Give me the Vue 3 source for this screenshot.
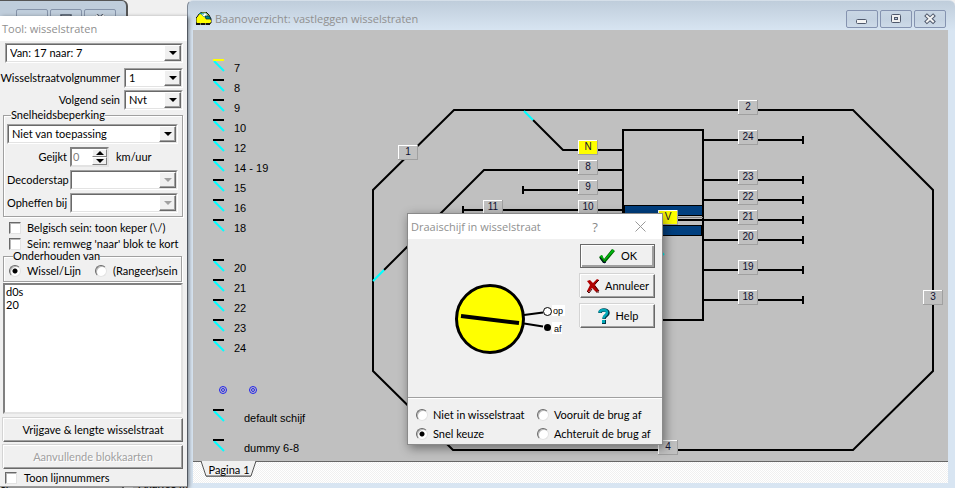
<script setup>
import { ref } from 'vue'

const route = ref('Van: 17 naar: 7')
const routeNumber = ref('1')
const nextSignal = ref('Nvt')
const speedLimit = ref('Niet van toepassing')
const speed = ref(0)
const belgian = ref(false)
const brakeShort = ref(false)
const maintain = ref('wissel')
const showLines = ref(false)
const choice = ref('snel')

const switches = [
  { y: 60, text: '7', active: true },
  { y: 80, text: '8' },
  { y: 100, text: '9' },
  { y: 120, text: '10' },
  { y: 140, text: '12' },
  { y: 160, text: '14 - 19' },
  { y: 180, text: '15' },
  { y: 200, text: '16' },
  { y: 220, text: '18' },
  { y: 260, text: '20' },
  { y: 280, text: '21' },
  { y: 300, text: '22' },
  { y: 320, text: '23' },
  { y: 340, text: '24' },
  { y: 410, text: 'default schijf', x: 244 },
  { y: 440, text: 'dummy 6-8', x: 244 },
]

const sidings = [140, 180, 200, 220, 240, 270, 300]

const blocks = [
  { x: 398, y: 145, text: '1' },
  { x: 738, y: 100, text: '2' },
  { x: 923, y: 290, text: '3' },
  { x: 658, y: 440, text: '4' },
  { x: 578, y: 140, text: 'N', hot: true },
  { x: 578, y: 160, text: '8' },
  { x: 578, y: 180, text: '9' },
  { x: 578, y: 200, text: '10' },
  { x: 483, y: 200, text: '11' },
  { x: 658, y: 210, text: 'V', hot: true },
  { x: 738, y: 130, text: '24' },
  { x: 738, y: 170, text: '23' },
  { x: 738, y: 190, text: '22' },
  { x: 738, y: 210, text: '21' },
  { x: 738, y: 230, text: '20' },
  { x: 738, y: 260, text: '19' },
  { x: 738, y: 290, text: '18' },
]
</script>

<template>
  <div class="desktop">
    <div class="back-window">
      <div class="back-title">
        <span class="cap"></span>
        <span class="cap"><svg width="12" height="9" viewBox="0 0 12 9"><rect x="1" y="1" width="10" height="8" fill="#eee" stroke="#4a5464" stroke-width="1.5" /><rect x="4" y="4" width="4" height="3" fill="#b9c8d8" stroke="#4a5464" /></svg></span>
        <span class="cap"><svg width="12" height="9" viewBox="0 0 12 9"><path d="M2 1L10 9M10 1L2 9" stroke="#4a5464" stroke-width="4" /><path d="M2 1L10 9M10 1L2 9" stroke="#f4f4f4" stroke-width="2" /></svg></span>
      </div>
      <div class="back-foot"><span>el</span><span class="back-tab">Analyse m</span></div>
    </div>

    <section class="main-window">
      <header class="main-title">
        <svg class="loco" width="16" height="14" viewBox="0 0 16 14">
          <path d="M1 5L3 2L6 0H10L13 3L15 7V11L13 12H1L0 10V6Z" fill="#ff0" stroke="#111" />
          <path d="M4 1H10L12 4L8 5Z" fill="#fff" stroke="#078" stroke-width=".6" />
          <path d="M9 4H13L15 7H10Z" fill="#088" stroke="#024" stroke-width=".7" />
          <path d="M3 1.500L8 2" stroke="#088" />
          <path d="M0 12H15" stroke="#111" stroke-width="2" stroke-dasharray="4 1" />
          <path d="M4 10H11L15 9" stroke="#ff0" stroke-width="2" fill="none" />
        </svg>
        <h1>Baanoverzicht: vastleggen wisselstraten</h1>
        <div class="caps">
          <button class="cap-btn" type="button" aria-label="Minimaliseren"><svg width="14" height="12" viewBox="0 0 14 12"><rect x="1.500" y="6.500" width="10" height="4" rx="1" fill="#f4f4f4" stroke="#4f586b" /></svg></button>
          <button class="cap-btn" type="button" aria-label="Maximaliseren"><svg width="14" height="12" viewBox="0 0 14 12"><rect x="2.500" y="1.500" width="9" height="8" rx="1" fill="#f0f0f0" stroke="#4f586b" /><rect x="5.500" y="4.500" width="3" height="2" fill="#b9c8d8" stroke="#4f586b" /></svg></button>
          <button class="cap-btn" type="button" aria-label="Sluiten"><svg width="14" height="12" viewBox="0 0 14 12"><path d="M4 3L10 8.500M10 3L4 8.500" stroke="#4f586b" stroke-width="4" stroke-linecap="square" /><path d="M4 3L10 8.500M10 3L4 8.500" stroke="#f4f4f4" stroke-width="2" stroke-linecap="square" /></svg></button>
        </div>
      </header>

      <div class="canvas">
        <svg class="track" width="755" height="432" viewBox="193 30 755 432">
          <g fill="none" stroke="#000" stroke-width="2">
            <path d="M454 110H853L933 190V371L853 450H453L373 371V190Z" />
            <path d="M533 120L563 150H623" />
            <path d="M384 270L484 170H623" />
            <path d="M523 190H623M523 186V194" />
            <path d="M463 210H623M463 206V214" />
            <rect x="623" y="130" width="80" height="190" />
            <path v-for="y in sidings" :key="y" :d="`M703 ${y}H803M803 ${y - 4}V${y + 4}`" />
            <path d="M640 220H703" />
          </g>
          <path d="M624 217.500H703" stroke="#888" />
          <rect x="624.500" y="205.500" width="78" height="10" fill="#003f7f" stroke="#000" />
          <rect x="624.500" y="225.500" width="77" height="10" fill="#003f7f" stroke="#000" />
          <path d="M524 111L533 120M373 281L384 270M656 246L664 255" stroke="#0ff" stroke-width="2" />

          <g v-for="s in switches" :key="s.text">
            <path :d="`M214 ${s.y + 1}L224 ${s.y + 11}`" stroke="#0ff" stroke-width="2" />
            <path :d="`M213 ${s.y}H224`" :stroke="s.active ? '#ff0' : '#000'" stroke-width="2" />
            <text :x="s.x || 234" :y="s.y + 12" class="switch-text">{{ s.text }}</text>
          </g>

          <g fill="none" stroke="#2020f0">
            <circle cx="223" cy="390" r="3.500" /><circle cx="223" cy="390" r="1.500" />
            <circle cx="253" cy="390" r="3.500" /><circle cx="253" cy="390" r="1.500" />
          </g>

          <g v-for="b in blocks" :key="b.text">
            <rect :x="b.x" :y="b.y" width="20" height="15" fill="#a0a0a0" />
            <rect :x="b.x" :y="b.y" width="19" height="14" fill="#fff" />
            <rect :x="b.x + 1" :y="b.y + 1" width="18" height="13" :fill="b.hot ? '#ff0' : '#c0c0c0'" />
            <text :x="b.x + 10" :y="b.y + 10" class="block-text">{{ b.text }}</text>
          </g>
        </svg>
      </div>

      <nav class="tabs">
        <button class="tab" type="button">
          <svg class="tab-shape" width="56" height="16" viewBox="0 0 56 16"><path d="M0 0L5 15H50L55 0" fill="#f0f0f0" stroke="#555" /><path d="M5 15.500H50" stroke="#777" /></svg>
          <span>Pagina 1</span>
        </button>
      </nav>
    </section>

    <section class="tool">
      <header class="title"><h2>Tool: wisselstraten</h2></header>
      <div class="tool-body">
        <div class="combo route">
          <select v-model="route" aria-label="Wisselstraat"><option>Van: 17 naar: 7</option></select>
          <span class="arrow"></span>
        </div>
        <div class="row">
          <label for="num">Wisselstraatvolgnummer</label>
          <div class="combo small"><select id="num" v-model="routeNumber"><option>1</option></select><span class="arrow"></span></div>
        </div>
        <div class="row second">
          <label for="sig">Volgend sein</label>
          <div class="combo small"><select id="sig" v-model="nextSignal"><option>Nvt</option></select><span class="arrow"></span></div>
        </div>

        <fieldset class="group speed">
          <legend>Snelheidsbeperking</legend>
          <div class="combo"><select v-model="speedLimit" aria-label="Snelheidsbeperking"><option>Niet van toepassing</option></select><span class="arrow"></span></div>
          <div class="field">
            <label for="spd">Geijkt</label>
            <div class="spin">
              <input id="spd" v-model="speed" type="text" disabled>
              <span class="steps">
                <button type="button" aria-label="Hoger" disabled><svg width="8" height="4" viewBox="0 0 8 4"><path d="M0 4L4 0L8 4Z" /></svg></button>
                <button type="button" aria-label="Lager" disabled><svg width="8" height="4" viewBox="0 0 8 4"><path d="M0 0L4 4L8 0Z" /></svg></button>
              </span>
            </div>
            <span>km/uur</span>
          </div>
          <div class="field"><label for="dec">Decoderstap</label><div class="combo off"><select id="dec" disabled></select><span class="arrow"></span></div></div>
          <div class="field"><label for="oph">Opheffen bij</label><div class="combo off"><select id="oph" disabled></select><span class="arrow"></span></div></div>
        </fieldset>

        <div class="checks">
          <label class="tick"><input v-model="belgian" type="checkbox">Belgisch sein: toon keper (\/)</label>
          <label class="tick"><input v-model="brakeShort" type="checkbox">Sein: remweg 'naar' blok te kort</label>
        </div>

        <fieldset class="group maintain">
          <legend>Onderhouden van</legend>
          <label class="tick"><input v-model="maintain" type="radio" name="maintain" value="wissel">Wissel/Lijn</label>
          <label class="tick"><input v-model="maintain" type="radio" name="maintain" value="sein">(Rangeer)sein</label>
        </fieldset>

        <select class="list" multiple aria-label="Onderdelen"><option>d0s</option><option>20</option></select>
        <div class="tool-actions">
          <button class="btn" type="button">Vrijgave &amp; lengte wisselstraat</button>
          <button class="btn" type="button" disabled>Aanvullende blokkaarten</button>
        </div>
        <label class="tick last"><input v-model="showLines" type="checkbox">Toon lijnnummers</label>
      </div>
    </section>

    <section class="dialog" role="dialog" aria-labelledby="dlg-title">
      <header class="title">
        <h2 id="dlg-title">Draaischijf in wisselstraat</h2>
        <button class="plain help" type="button">?</button>
        <button class="plain" type="button" aria-label="Sluiten"><svg width="11" height="11" viewBox="0 0 11 11"><path d="M.5 .5L10.500 10.500M10.500 .5L.5 10.500" stroke="#999" /></svg></button>
      </header>
      <div class="dialog-body">
        <svg class="disc" width="160" height="120" viewBox="408 239 160 120">
          <circle cx="490" cy="319" r="33.500" fill="#ff0" stroke="#000" stroke-width="3" />
          <path d="M461 316L519 323" stroke="#000" stroke-width="4" />
          <path d="M524 315L543 312.500M524 323.500L543 326.500" stroke="#000" stroke-width="2" />
          <circle cx="547.500" cy="311.500" r="4" fill="#fff" stroke="#000" />
          <circle cx="547.500" cy="327.500" r="3.500" />
          <rect x="552" y="305" width="13" height="11" fill="#fff" />
          <rect x="552" y="322" width="10" height="12" fill="#fff" />
          <text x="553" y="314" class="disc-text">op</text>
          <text x="554" y="332" class="disc-text">af</text>
        </svg>
        <div class="actions">
          <button class="btn default" type="button">
            <svg width="18" height="16" viewBox="0 0 18 16"><path d="M1 9L4 7L6 11L14 1L17 3L7 15H5Z" fill="#006400" /><path d="M2 8L4 7L6 12L15 1L16 3L6.500 13Z" fill="#0b1" /><path d="M2 10L6 15L8 14" stroke="#003" fill="none" /></svg>
            OK
          </button>
          <button class="btn" type="button">
            <svg width="14" height="16" viewBox="0 0 14 16"><path d="M1 3L4 2L7 5L11 1L13 2L9 7L13 13L10 14L6 10L3 14L1 13L4 7Z" fill="#b00000" /><path d="M1 13L3 15L6 11M10 14L13 14M9 8L13 13M9 6L13 2" stroke="#400" fill="none" /></svg>
            Annuleer
          </button>
          <button class="btn" type="button">
            <svg width="14" height="16" viewBox="0 0 14 16"><path d="M3 5C3 1 11 1 11 5C11 8 7 7 7 11" fill="none" stroke="#003848" stroke-width="3.500" /><path d="M2.500 4.500C3 1 10 1 10 4.500C10 7.500 6.500 7 6.500 10.500" fill="none" stroke="#00a8b8" stroke-width="2.500" /><rect x="5" y="12" width="4" height="4" fill="#003848" /><rect x="5" y="12" width="3" height="3" fill="#00a8b8" /></svg>
            Help
          </button>
        </div>
      </div>
      <div class="choices">
        <label class="tick"><input v-model="choice" type="radio" name="choice" value="niet">Niet in wisselstraat</label>
        <label class="tick"><input v-model="choice" type="radio" name="choice" value="vooruit">Vooruit de brug af</label>
        <label class="tick"><input v-model="choice" type="radio" name="choice" value="snel">Snel keuze</label>
        <label class="tick"><input v-model="choice" type="radio" name="choice" value="achteruit">Achteruit de brug af</label>
      </div>
    </section>
  </div>
</template>

<style>
body { overflow: hidden; background: #f0f0f0; }
</style>

<style scoped>
* { box-sizing: border-box; }
.desktop { position: relative; height: 100vh; overflow: hidden; background: #f0f0f0; color: #000; font: 11px/14px Lato, "Liberation Sans", sans-serif; }
button, select, input { font: inherit; color: inherit; margin: 0; padding: 0; }
h1, h2 { margin: 0; font: 11px/16px "Open Sans", "Noto Sans", sans-serif; color: #909090; white-space: nowrap; }
label, span, legend { white-space: nowrap; }

.back-window { position: absolute; inset: 0 auto 0 0; width: 187px; display: flex; flex-direction: column; justify-content: space-between; }
.back-title { width: 128px; height: 20px; padding: 8px 10px 0 0; display: flex; justify-content: flex-end; gap: 2px; background: #bfcddb; border: solid #555; border-width: 1px 2px 0 0; border-radius: 0 6px 0 0; }
.cap { width: 32px; height: 22px; display: flex; justify-content: center; padding-top: 4px; border: 1px solid #8593a9; border-radius: 2px; }
.back-foot { display: flex; height: 8px; background: linear-gradient(90deg, #c8c8c8 122px, #666 122px, #666 124px, #f0f0f0 124px, #f0f0f0 133px, #ccc 133px); gap: 130px; line-height: 8px; }

.main-window { position: absolute; inset: 0 0 0 187px; display: flex; flex-direction: column; padding: 0 7px 5px 5px; background: linear-gradient(#bfcddb, #d8e5f2 30px); border-top: 1px solid #d5dfe9; border-left: 1px solid #7d8794; border-radius: 6px 6px 0 0; }
.main-title { height: 29px; display: flex; align-items: center; flex: none; padding: 6px 2px 0 3px; gap: 3px; }
.main-title h1 { flex: 1; }
.caps { display: flex; gap: 2px; }
.cap-btn { width: 32px; height: 18px; display: flex; align-items: center; justify-content: center; background: linear-gradient(#c9d6e4, #c4d2e1 50%, #cddae8); border: 1px solid #8593b0; border-radius: 2px; }
.canvas { flex: 1; min-height: 0; overflow: hidden; background: #c0c0c0; }
.track { display: block; font-family: "Liberation Sans", Arial, sans-serif; }
.switch-text { font-size: 11px; }
.block-text { font-size: 10px; text-anchor: middle; fill: #101030; }
.tabs { height: 22px; flex: none; padding-left: 8px; border-top: 1px solid #666; background: repeating-conic-gradient(#f0f0f0 0 25%, #fff 0 50%) 0 0 / 2px 2px; }
.tab { position: relative; width: 56px; height: 16px; border: 0; background: none; }
.tab span { position: relative; }
.tab-shape { position: absolute; left: 0; top: -1px; }

.title { display: flex; align-items: center; height: 25px; flex: none; background: #fff; }
.tool { position: absolute; left: 0; top: 16px; width: 187px; background: #f0f0f0; border-bottom: 1px solid #999; box-shadow: 2px 1px 4px rgba(0, 0, 0, .45); }
.tool .title { padding-left: 2px; }
.tool-body { display: flex; flex-direction: column; padding: 2px 4px 1px 3px; }
.combo { display: grid; flex: 1; height: 20px; border: 1px solid; border-color: #a0a0a0 #fff #fff #a0a0a0; background: #fff; }
.combo > * { grid-area: 1 / 1; }
.combo select { appearance: none; width: 100%; min-width: 0; border: 1px solid; border-color: #696969 #e3e3e3 #e3e3e3 #696969; border-radius: 0; background: #fff; padding-left: 3px; opacity: 1; }
.combo .arrow { justify-self: end; align-self: center; pointer-events: none; width: 17px; height: 16px; margin-right: 1px; display: flex; align-items: center; justify-content: center; background: #f0f0f0; border: 1px solid; border-color: #fff #696969 #696969 #fff; box-shadow: inset -1px -1px #a0a0a0; }
.arrow::after { content: ""; border: 4px solid transparent; border-top-color: #000; border-bottom: 0; }
.off .arrow::after { border-top-color: #a0a0a0; }
.route { flex: none; margin-left: 2px; }
.row { display: flex; align-items: center; justify-content: flex-end; gap: 4px; margin-top: 5px; }
.row.second { margin-top: 2px; }
.small { flex: none; width: 59px; }
.group { margin: 0; min-width: 0; border: 1px solid #a0a0a0; box-shadow: 1px 1px #fff, inset 1px 1px #fff; }
.group legend { padding: 0; margin-left: 4px; line-height: 10px; background: #f0f0f0; }
.speed { padding: 4px 4px 3px 3px; display: flex; flex-direction: column; gap: 3px; }
.speed > .combo { flex: none; }
.field { display: flex; align-items: center; gap: 3px; }
.field label { width: 60px; text-align: right; }
.spin { display: flex; width: 39px; height: 20px; background: #fff; border: 2px solid; border-color: #808080 #e3e3e3 #e3e3e3 #808080; margin-right: 4px; }
.spin input { flex: 1; width: 0; border: 0; padding-left: 1px; background: #fff; color: #808080; }
.steps { width: 15px; display: flex; flex-direction: column; }
.steps button { flex: 1; display: flex; align-items: center; justify-content: center; background: #f0f0f0; border: 1px solid; border-color: #fff #808080 #808080 #fff; }
.checks { display: flex; flex-direction: column; gap: 2px; padding: 4px 0 0 6px; }
.tick { display: flex; align-items: center; gap: 6px; }
.tick input { appearance: none; flex: none; width: 12px; height: 12px; background: #fff; border: 1px solid; border-color: #696969 #e3e3e3 #e3e3e3 #696969; box-shadow: inset 1px 1px #b8b8b8; }
.tick input[type="radio"] { border-radius: 50%; }
.tick input[type="radio"]:checked { background: radial-gradient(circle, #000 2px, #fff 3px); }
.maintain { display: flex; gap: 14px; margin: 0 1px 1px 0; padding: 3px 5px; }
.list { height: 131px; width: 100%; border: 2px solid; border-color: #808080 #e3e3e3 #e3e3e3 #808080; border-radius: 0; background: #fff; overflow: hidden; outline: 0; }
.list option { padding: 0 1px; min-height: 0; line-height: 13px; }
.btn { display: flex; align-items: center; justify-content: center; height: 24px; border: 1px solid; border-color: #fff #696969 #696969 #fff; box-shadow: inset -1px -1px #a0a0a0, -1px -1px #d4d4d4; background: #f0f0f0; white-space: nowrap; }
.tool-actions { display: flex; flex-direction: column; gap: 3px; padding-top: 4px; }
.btn:disabled { color: #a0a0a0; text-shadow: 1px 1px #fff; }
.last { padding: 2px 0 0 2px; gap: 7px; }

.dialog { position: absolute; left: 407px; top: 213px; width: 256px; background: #f0f0f0; border: 1px solid #8a8a8a; box-shadow: 2px 3px 10px rgba(0, 0, 0, .45); }
.dialog .title { padding: 0 16px 0 3px; }
.dialog h2 { flex: 1; }
.plain { border: 0; background: none; width: 12px; height: 16px; display: flex; align-items: center; justify-content: center; color: #888; }
.help { margin-right: 33px; font: 13px/16px "Open Sans", sans-serif; }
.dialog-body { display: flex; justify-content: space-between; height: 158px; padding-right: 7px; }
.actions { display: flex; flex-direction: column; gap: 6px; width: 75px; padding-top: 5px; }
.actions .btn { gap: 5px; }
.actions .default { border-color: #696969; box-shadow: inset 1px 1px #fff, inset -2px -2px #a0a0a0; }
.disc { display: block; flex: none; }
.disc-text { font: 9px "Liberation Sans", Arial, sans-serif; }
.choices { display: grid; grid-template-columns: 121px 1fr; row-gap: 5px; padding: 10px 0 3px 8px; border-top: 1px solid #a0a0a0; box-shadow: inset 0 1px #fff; }
.choices .tick { gap: 5px; }
</style>
